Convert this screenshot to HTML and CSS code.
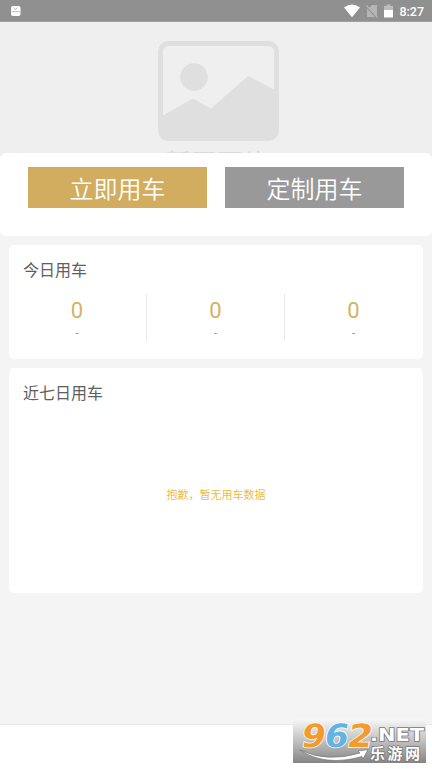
FILE: index.html
```html
<!DOCTYPE html>
<html lang="zh-CN">
<head>
<meta charset="utf-8">
<title>用车</title>
<link rel="stylesheet" href="styles.css">
</head>
<body>
<header class="status">
  <svg class="status-app" width="10" height="11" viewBox="0 0 10 11"><rect width="9.5" height="10" rx="2" fill="#fff"/><path d="M.5 5.7h8.5M3 1.8l1.6 1.8 1.6-1.8" stroke="#aaa" stroke-width=".8" fill="none"/></svg>
  <div class="status-right">
    <svg width="16" height="14" viewBox="0 0 16 14"><path d="M0 3.4Q8-2.2 16 3.4L8 13.2Z" fill="#fff"/></svg>
    <svg width="12" height="14" viewBox="0 0 12 14"><path d="M11 1v11.5L3 3.7 6 1Z" fill="#b5b5b5"/><path d="M1 4.5V13h7.8Z" fill="#b5b5b5"/><path d="M.5 1.5l11 12" stroke="#b5b5b5" stroke-width="1.2"/></svg>
    <svg width="9" height="14" viewBox="0 0 9 14"><path d="M0 2h2.500V.5h4V2H9v5H0Z" fill="#bcbcbc"/><path d="M0 6h9v7.500H0Z" fill="#fff"/></svg>
    <span class="clock">8:27</span>
  </div>
</header>
<section class="hero">
  <svg width="121" height="100" viewBox="0 0 121 100"><rect x="2.5" y="2.5" width="116" height="95" rx="8" fill="none" stroke="#dfdfdf" stroke-width="5"/><circle cx="36" cy="36" r="13.8" fill="#dfdfdf"/><path d="M4 75L35 57.5 53 67.5 90 35 118 49.5V96H4Z" fill="#dfdfdf"/></svg>
  <div class="hero-text">暂无图片</div>
</section>
<section class="actions">
  <button class="btn gold">立即用车</button>
  <button class="btn gray">定制用车</button>
</section>
<section class="card today">
  <h2>今日用车</h2>
  <div class="stats">
    <div class="stat"><b>0</b><span>-</span></div>
    <div class="stat"><b>0</b><span>-</span></div>
    <div class="stat"><b>0</b><span>-</span></div>
  </div>
</section>
<section class="card week">
  <h2>近七日用车</h2>
  <p class="empty">抱歉，暂无用车数据</p>
</section>
<footer class="bottom"></footer>
<svg class="mark" width="133" height="44" viewBox="0 0 133 44">
  <defs><linearGradient id="shade" x1="0" y1="0" x2="0" y2="1"><stop offset="0" stop-color="#f7f7f7"/><stop offset=".45" stop-color="#c6c6c6"/><stop offset="1" stop-color="#858585"/></linearGradient></defs>
  <rect width="133" height="44" fill="url(#shade)"/>
  <g class="digits" transform="translate(7 27.5) skewX(-10)">
    <text class="orange" x="0" textLength="24" lengthAdjust="spacingAndGlyphs">9</text>
    <text class="blue" x="23" textLength="24" lengthAdjust="spacingAndGlyphs">6</text>
    <text class="orange" x="46" textLength="25" lengthAdjust="spacingAndGlyphs">2</text>
  </g>
  <path d="M7 31Q34 44 67 34L65 32 75 30.500 70 40 69 37.500Q32 48 7 31Z" fill="#fff" stroke="#777" stroke-width=".7"/>
  <text class="net" x="77" y="21.500" textLength="54" lengthAdjust="spacingAndGlyphs">.NET</text>
  <text class="cn" x="77" y="39.500" textLength="50">乐游网</text>
</svg>
</body>
</html>
```
FILE: styles.css
```css
* { box-sizing: border-box; }
body {
  margin: 0;
  height: 769px;
  display: flex;
  flex-direction: column;
  position: relative;
  overflow: hidden;
  background: #f4f4f4;
  font-family: Roboto, "Noto Sans CJK SC", sans-serif;
}
.status {
  height: 22px;
  flex: none;
  background: #909090;
  border-bottom: 1px solid #a0a0a0;
  display: flex;
  justify-content: space-between;
  padding: 0 8px 0 11px;
}
.status-app { margin-top: 6px; }
.status-right { display: flex; gap: 7px; padding-top: 4px; }
.status-right svg + svg { margin-left: -1px; }
.clock { color: #fff; font-size: 12.500px; font-weight: 500; line-height: 15px; margin-left: -1px; }
.hero {
  height: 141px;
  flex: none;
  background: #efefef;
  overflow: hidden;
  display: flex;
  flex-direction: column;
  align-items: center;
  padding: 19px 0 0 5px;
}
.hero svg { flex: none; }
.hero-text { color: #d8d8d8; font-size: 26px; line-height: 40px; margin: 3px 3px 0 0; font-weight: 400; }
.actions {
  height: 83px;
  flex: none;
  margin-top: -10px;
  border-radius: 6px;
  background: #fff;
  padding: 14px 28px 0;
  display: flex;
  justify-content: space-between;
}
.btn {
  width: 179px;
  height: 41px;
  border: 0;
  padding: 1px 0 0 0;
  color: #fff;
  font: 350 24px/40px "Noto Sans CJK SC", sans-serif;
}
.gold { background: #d2ad60; }
.gray { background: #999; }
.card { flex: none; margin: 9px 9px 0; background: #fff; border-radius: 5px; }
.card h2 { margin: 0; padding: 14px 14px 0; font-size: 16px; line-height: 24px; font-weight: 400; color: #606060; }
.today { height: 114px; }
.week { height: 225px; }
.stats { display: grid; grid-template-columns: repeat(3, 1fr); margin: 11px 1px 0 -1px; }
.stat { height: 47px; display: flex; flex-direction: column; align-items: center; padding-top: 4px; }
.stat + .stat { border-left: 1px solid #e9e9e9; }
.stat b { font-weight: 400; font-size: 22px; line-height: 25px; color: #d4b265; }
.stat span { font-size: 11px; line-height: 16px; color: #888; margin-top: 3px; }
.empty { margin: 82px 0 0; text-align: center; font-size: 11px; line-height: 16px; color: #edbd45; }
.bottom { height: 45px; flex: none; margin-top: auto; background: #fff; border-top: 1px solid #e9e9e9; }
.mark { position: absolute; left: 293px; top: 719px; }
.digits { font: bold 32px "DejaVu Sans", sans-serif; stroke: #fff; stroke-width: 1.500px; paint-order: stroke; }
.orange { fill: #f59a2c; }
.blue { fill: #62b3e4; }
.net { font: bold 18px "DejaVu Sans", sans-serif; fill: #fff; stroke: #777; stroke-width: 1.500px; paint-order: stroke; }
.cn { font: bold 15px "Noto Sans CJK SC", sans-serif; fill: #fff; stroke: #777; stroke-width: 1.500px; paint-order: stroke; }
```
